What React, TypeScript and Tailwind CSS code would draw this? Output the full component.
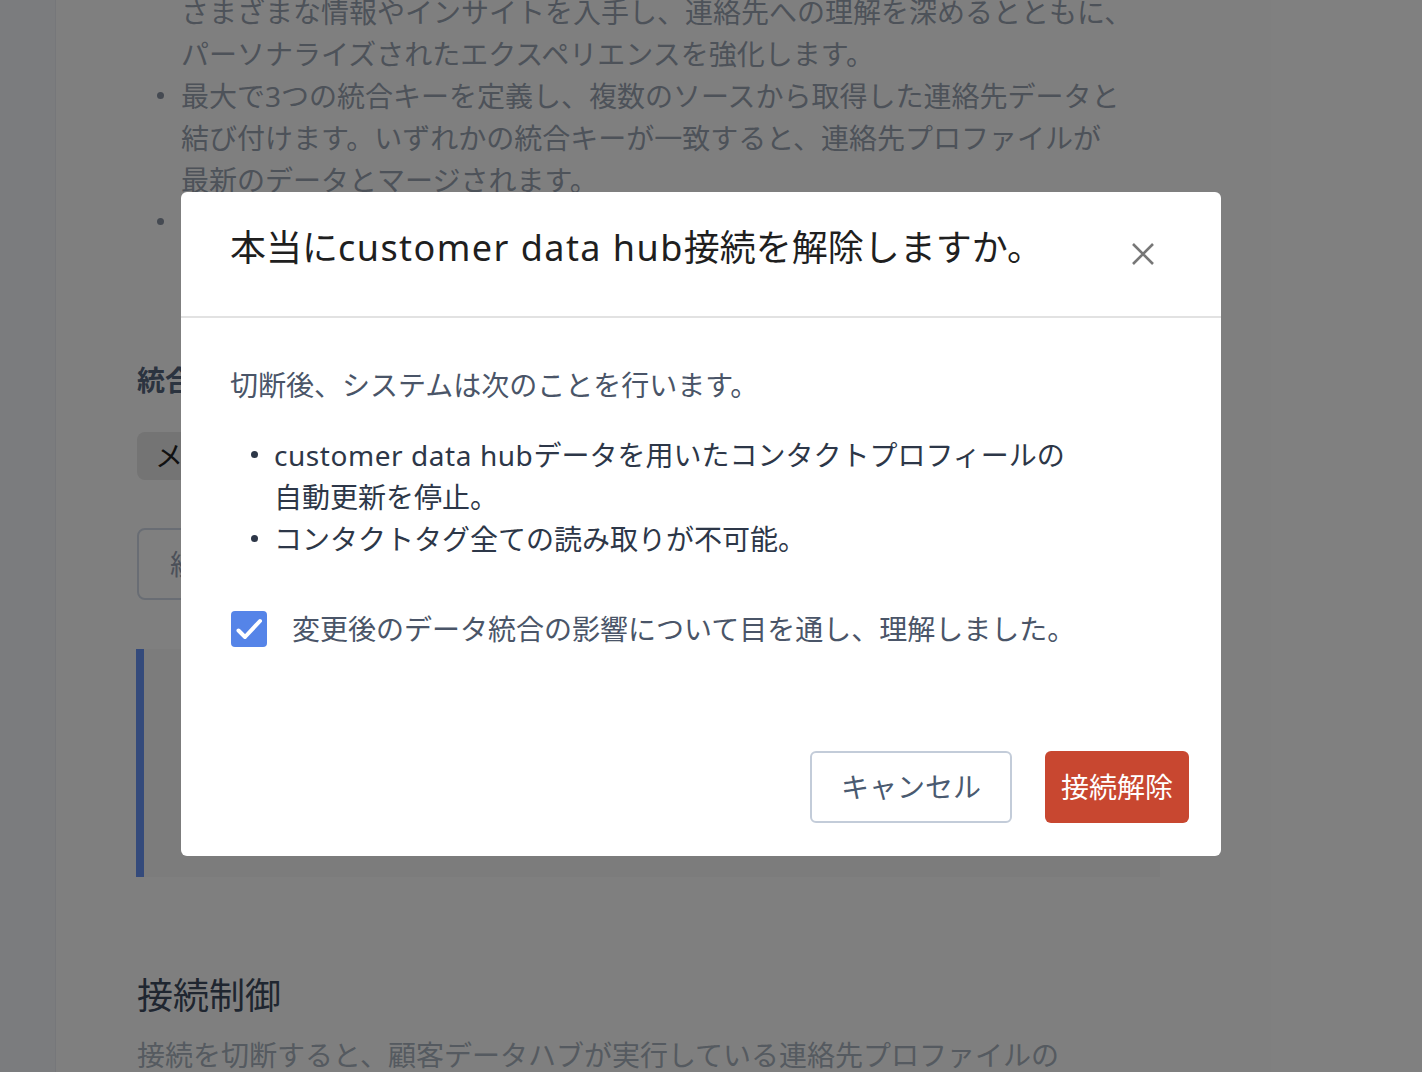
import { useState } from 'react'

const FONT = { fontFamily: '"Noto Sans", "Noto Sans CJK JP", sans-serif' }

function Dot({ className }: { className: string }) {
    return <span className={`shrink-0 rounded-full ${className}`} />
}

function BackgroundPage() {
    return (
        <div className="flex h-full">
            <aside className="w-[56px] shrink-0 border-r border-[#eceef4] bg-[#f6f8fc]" />
            <main className="flex-1 pl-[81px]">
                <ul className="mt-[-51px] whitespace-nowrap text-[28px] leading-[42px] text-[#9aa4b2]">
                    <li className="flex pl-[20px]">
                        <Dot className="mt-[17px] mr-[17px] h-[7px] w-[7px] bg-[#8a94a4]" />
                        <span>
                            複数のチャネルから収集した連絡先データを一元管理することで、
                            <br />
                            さまざまな情報やインサイトを入手し、連絡先への理解を深めるとともに、
                            <br />
                            パーソナライズされたエクスペリエンスを強化します。
                        </span>
                    </li>
                    <li className="flex pl-[20px]">
                        <Dot className="mt-[17px] mr-[17px] h-[7px] w-[7px] bg-[#8a94a4]" />
                        <span>
                            最大で3つの統合キーを定義し、複数のソースから取得した連絡先データと
                            <br />
                            結び付けます。いずれかの統合キーが一致すると、連絡先プロファイルが
                            <br />
                            最新のデータとマージされます。
                        </span>
                    </li>
                    <li className="flex pl-[20px]">
                        <Dot className="mt-[17px] mr-[17px] h-[7px] w-[7px] bg-[#8a94a4]" />
                        <span>統合されたデータはすべてのチャネルで利用できます。</span>
                    </li>
                </ul>

                <h3 className="mt-[116px] text-[28px] font-bold leading-[42px] text-[#56667e]">統合キー</h3>

                <div className="mt-[31px] flex h-[48px] w-fit items-center rounded-lg bg-[#e8e8e8] px-[18px] text-[28px] text-[#222]">
                    メールアドレス
                </div>

                <div className="mt-[48px] flex h-[72px] w-[420px] items-center rounded-lg border-2 border-[#d2dbe8] pl-[31px] text-[28px] text-[#96a0b2]">
                    統合キーを追加
                </div>

                <div className="mt-[49px] ml-[-1px] h-[228px] w-[1024px] border-l-8 border-[#6894f6] bg-[#f9f9f9]" />

                <h2 className="mt-[95px] text-[36px] leading-[48px] text-[#3e4c60]">接続制御</h2>
                <p className="mt-[14px] whitespace-nowrap text-[28px] leading-[42px] text-[#aab4c0]">
                    接続を切断すると、顧客データハブが実行している連絡先プロファイルの
                </p>
            </main>
        </div>
    )
}

function DisconnectModal() {
    const [agreed, setAgreed] = useState(true)

    return (
        <div className="absolute left-[181px] top-[192px] w-[1040px] rounded-md bg-white">
            <div className="flex h-[126px] items-start justify-between border-b-2 border-[#e2e2e2] pl-[49px] pr-[62px]">
                <h2 className="pt-[38px] text-[36px] leading-[36px] text-[#1f1f1f]">
                    本当に<span className="tracking-[0.04em]">customer data hub</span>接続を解除しますか。
                </h2>
                <button className="flex h-8 w-8 items-center justify-center self-center" aria-label="close">
                    <svg width="22" height="22" viewBox="0 0 22 22" fill="none">
                        <path d="M1 1 L21 21 M21 1 L1 21" stroke="#777" strokeWidth="2.6" />
                    </svg>
                </button>
            </div>

            <div className="px-[49px] pt-[46px]">
                <p className="text-[28px] leading-[42px] text-[#4a5568]">切断後、システムは次のことを行います。</p>
                <ul className="mt-[28px] text-[28px] leading-[42px] text-[#2d3748]">
                    <li className="flex pl-[21px]">
                        <Dot className="mt-[17px] mr-[16px] h-[7px] w-[7px] bg-[#2d3748]" />
                        <span>
                            <span className="tracking-[0.02em]">customer data hub</span>
                            データを用いたコンタクトプロフィールの
                            <br />
                            自動更新を停止。
                        </span>
                    </li>
                    <li className="flex pl-[21px]">
                        <Dot className="mt-[17px] mr-[16px] h-[7px] w-[7px] bg-[#2d3748]" />
                        <span>コンタクトタグ全ての読み取りが不可能。</span>
                    </li>
                </ul>

                <label className="mt-[48px] flex h-[42px] cursor-pointer items-center">
                    <button
                        type="button"
                        onClick={() => setAgreed(!agreed)}
                        className={`ml-[1px] flex h-[36px] w-[36px] items-center justify-center rounded-[4px] ${
                            agreed ? 'bg-[#5584e8]' : 'border-2 border-[#c3ccd9] bg-white'
                        }`}
                    >
                        {agreed && (
                            <svg width="36" height="36" viewBox="0 0 36 36" fill="none">
                                <path
                                    d="M7.5 19.5 L14 26 L29 10"
                                    stroke="white"
                                    strokeWidth="4"
                                    strokeLinecap="round"
                                    strokeLinejoin="round"
                                />
                            </svg>
                        )}
                    </button>
                    <span className="ml-[25px] text-[28px] leading-[42px] text-[#4a5568]">
                        変更後のデータ統合の影響について目を通し、理解しました。
                    </span>
                </label>
            </div>

            <div className="flex justify-end gap-[33px] pt-[101px] pr-[32px] pb-[33px]">
                <button className="flex h-[72px] w-[202px] items-center justify-center rounded-md border-2 border-[#c3ccd9] text-[28px] text-[#4a5a70]">
                    キャンセル
                </button>
                <button className="flex h-[72px] w-[144px] items-center justify-center rounded-md bg-[#c84730] text-[28px] text-white">
                    接続解除
                </button>
            </div>
        </div>
    )
}

export default function App() {
    return (
        <div className="relative h-[1072px] w-[1422px] overflow-hidden bg-white" style={FONT}>
            <BackgroundPage />
            <div className="absolute inset-0 bg-black/50" />
            <DisconnectModal />
        </div>
    )
}
